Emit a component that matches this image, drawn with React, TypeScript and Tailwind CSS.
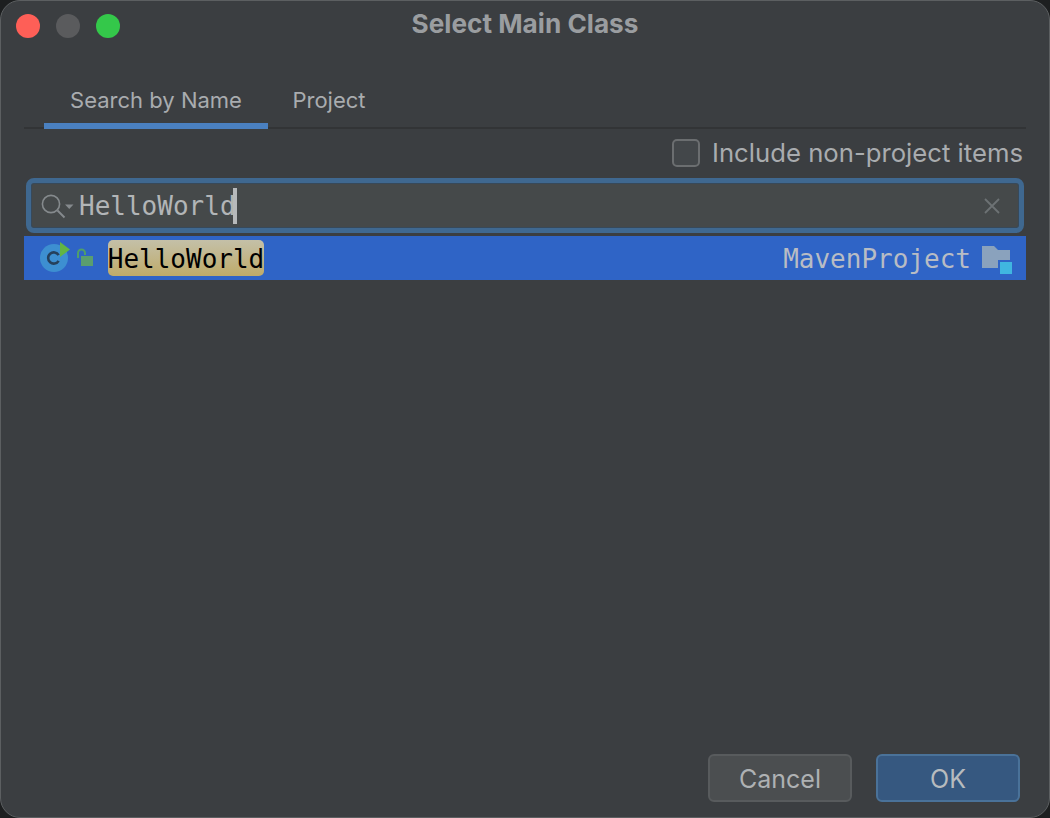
const ui = "font-['Inter','Liberation_Sans',sans-serif]";
const mono = "font-['DejaVu_Sans_Mono','Liberation_Mono',monospace]";

function ClassIcon() {
  return (
    <svg width="34" height="32" viewBox="0 0 34 32" className="shrink-0">
      <circle cx="14" cy="16" r="14" fill="#3d8fd1" />
      <path d="M18.6 13.2a5.6 5.6 0 1 0 0 5.6" fill="none" stroke="#25405c" strokeWidth="2.6" />
      <path d="M20 0l10 7.5-10 7.5z" fill="#62b543" />
    </svg>
  );
}

function UnlockIcon() {
  return (
    <svg width="18" height="20" viewBox="0 0 18 20" className="shrink-0">
      <path d="M2 10V5a3.5 3.5 0 0 1 7 0v2" fill="none" stroke="#4f9e6a" strokeWidth="2" />
      <rect x="5" y="8" width="12" height="10" fill="#5a9e6f" />
    </svg>
  );
}

function FolderIcon() {
  return (
    <svg width="32" height="32" viewBox="0 0 32 32" className="shrink-0">
      <path d="M0 4h12l4 4h12v18H0z" fill="#8aa2bd" />
      <rect x="16" y="18" width="14" height="14" fill="#2f64c6" />
      <rect x="18" y="20" width="12" height="12" fill="#40b6e0" />
    </svg>
  );
}

function SearchIcon() {
  return (
    <svg width="34" height="30" viewBox="0 0 34 30" className="shrink-0">
      <circle cx="10" cy="13" r="8.6" fill="none" stroke="#858a8d" strokeWidth="1.6" />
      <path d="M16.5 19.5l7 7" stroke="#858a8d" strokeWidth="2" />
      <path d="M24 13.5h8.5l-4.25 4.5z" fill="#858a8d" />
    </svg>
  );
}

export default function App() {
  return (
    <div className="h-[818px] w-[1050px] overflow-hidden bg-[#1d1f20]">
      <div className={`flex h-full flex-col rounded-[20px] border border-[#5c5f61] bg-[#3b3e41] text-[#a9acaf] ${ui}`}>
        <div className="relative flex h-[50px] shrink-0 items-center justify-center pb-[3px]">
          <div className="absolute left-[15px] top-[13px] flex gap-4">
            <span className="size-6 rounded-full bg-[#fe5f57]" />
            <span className="size-6 rounded-full bg-[#5a5b5d]" />
            <span className="size-6 rounded-full bg-[#34c84a]" />
          </div>
          <span className="text-[26.2px] font-bold leading-none text-[#9a9da0]">Select Main Class</span>
        </div>

        <div className="mx-[23px] mt-[24px] flex h-[54px] shrink-0 border-b-2 border-[#323436]">
          <div className="-mb-0.5 ml-5 flex w-[224px] items-center justify-center border-b-[6px] border-[#4a80c0]">
            <span className="mt-[2px] text-[22px] leading-none">Search by Name</span>
          </div>
          <div className="flex w-[122px] items-center justify-center pb-[2px]">
            <span className="text-[22px] leading-none">Project</span>
          </div>
        </div>

        <div className="mr-[26px] mt-[10px] flex h-[28px] shrink-0 items-center justify-end gap-3">
          <span className="size-[28px] rounded-[5px] border-2 border-[#6b6e70] bg-[#43474a]" />
          <span className="text-[25.7px] leading-none">Include non-project items</span>
        </div>

        <div className="mx-[25px] mt-[11px] flex h-[55px] shrink-0 items-center rounded-[8px] border-[5px] border-[#3f6890] bg-[#45494a] pl-[10px] pr-[18px] shadow-[inset_0_0_0_1px_#37495a]">
          <SearchIcon />
          <span className={`ml-[4px] text-[26px] leading-none text-[#b2b5b7] ${mono}`}>HelloWorld</span>
          <span className="-ml-[3px] h-9 w-1 bg-[#b6b9bb]" />
          <svg width="18" height="18" viewBox="0 0 18 18" className="ml-auto shrink-0">
            <path d="M2 2l14 14M16 2L2 16" stroke="#6d7274" strokeWidth="1.8" />
          </svg>
        </div>

        <div className="mx-[23px] mt-[3px] flex h-11 shrink-0 items-center bg-[#2f64c6] pl-[16px] pr-[12px]">
          <ClassIcon />
          <span className="ml-[2px]"><UnlockIcon /></span>
          <span className={`ml-[14px] flex h-9 w-[156px] items-center justify-center rounded-[5px] bg-gradient-to-b from-[#c4c0a8] to-[#bfab68] pt-[2px] text-[26px] leading-none text-black ${mono}`}>
            HelloWorld
          </span>
          <span className={`ml-auto pt-[2px] text-[26px] leading-none text-[#b8bcc4] ${mono}`}>MavenProject</span>
          <span className="ml-[11px]"><FolderIcon /></span>
        </div>

        <div className="mb-[15px] mr-[29px] mt-auto flex justify-end gap-[24px]">
          <button className="h-12 w-[144px] rounded-[6px] border-2 border-[#585b5d] bg-[#4b4e50] pt-[2px] text-[25px] leading-none text-[#aeb1b3]">Cancel</button>
          <button className="h-12 w-[144px] rounded-[6px] border-2 border-[#4a7299] bg-[#365880] pt-[2px] text-[25px] leading-none text-[#b7bbbe]">OK</button>
        </div>
      </div>
    </div>
  );
}
